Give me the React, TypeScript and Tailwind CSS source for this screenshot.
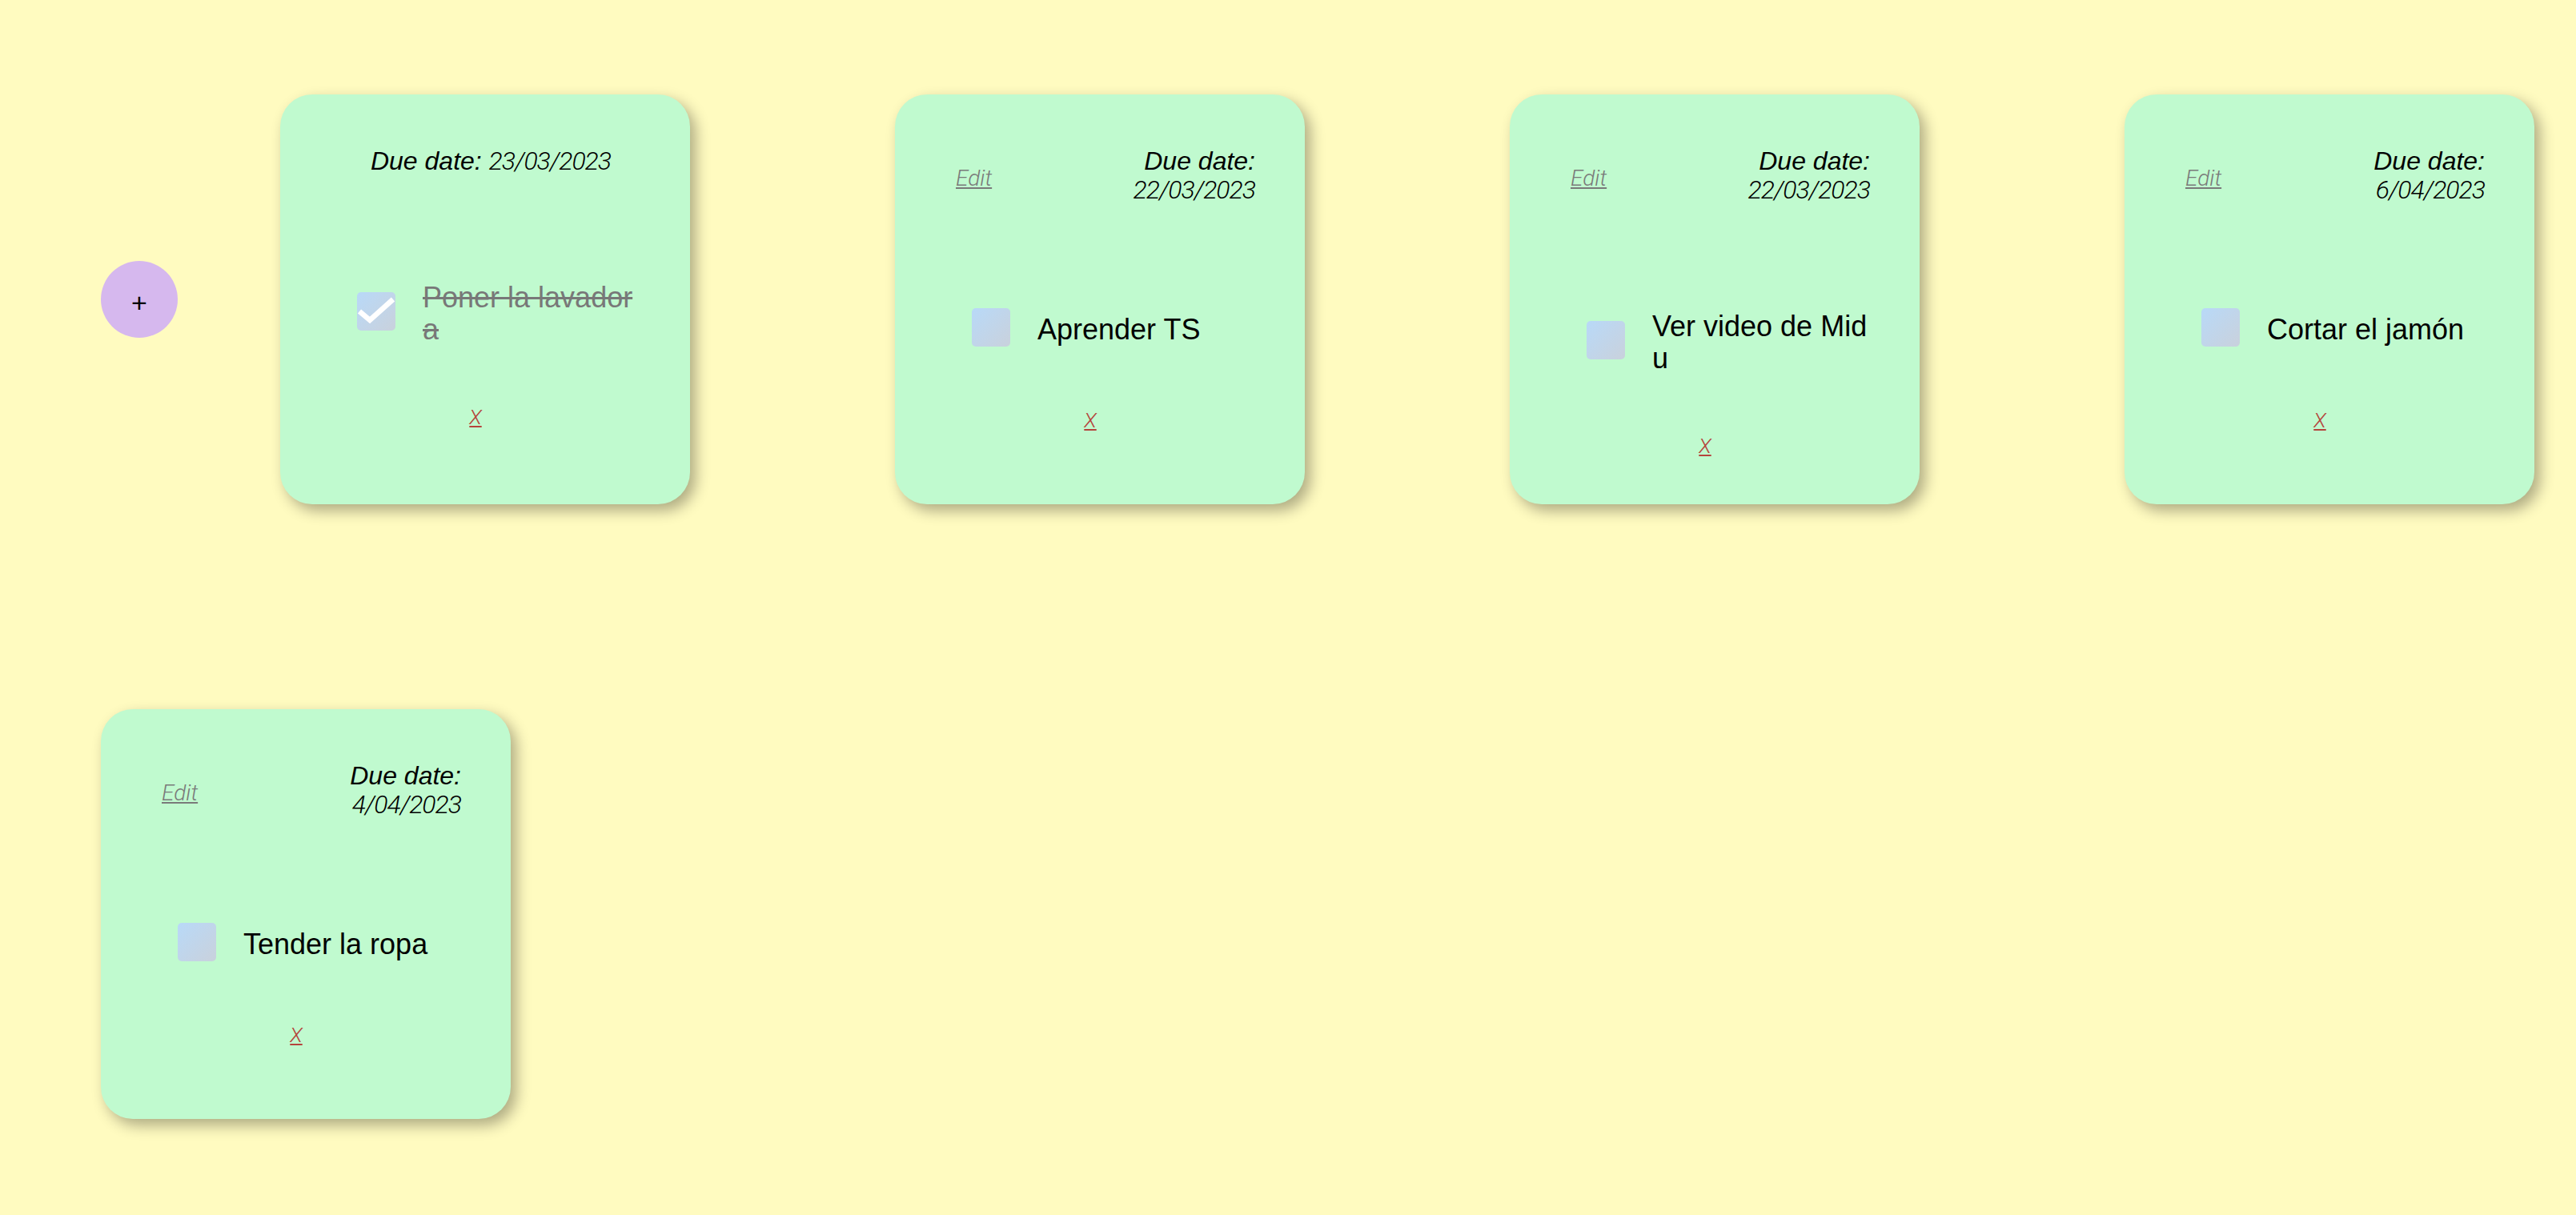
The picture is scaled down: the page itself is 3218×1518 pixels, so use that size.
import React from "react";

type Todo = { text: string; date: string; done: boolean; edit: boolean };

const todos: Todo[] = [
  { text: "Poner la lavadora", date: "23/03/2023", done: true, edit: false },
  { text: "Aprender TS", date: "22/03/2023", done: false, edit: true },
  { text: "Ver video de Midu", date: "22/03/2023", done: false, edit: true },
  { text: "Cortar el jamón", date: "6/04/2023", done: false, edit: true },
  { text: "Tender la ropa", date: "4/04/2023", done: false, edit: true },
];

function Check() {
  return (
    <svg viewBox="0 0 48 48" className="h-[48px] w-[48px]">
      <polyline
        points="3,24 16,35 45,9"
        fill="none"
        stroke="#ffffff"
        strokeWidth="6.5"
        strokeLinejoin="miter"
      />
    </svg>
  );
}

function Card({ t }: { t: Todo }) {
  return (
    <div className="flex h-[512px] w-[512px] shrink-0 flex-col rounded-[40px] bg-[#c0facf] pt-[65px] shadow-[7px_8px_18px_rgba(0,0,0,0.32)]">
      <div
        className={`flex items-center pl-[76px] pr-[62px] ${
          t.edit ? "justify-between gap-x-[60px]" : "justify-center"
        }`}
      >
        {t.edit && (
          <a className="shrink-0 cursor-pointer pt-[8px] font-['Roboto',sans-serif] text-[28px] font-light italic leading-[32px] text-[#7a7a7a] underline">
            Edit
          </a>
        )}
        <p
          className={`text-[32px] italic leading-[36px] text-black ${
            t.edit ? "text-right" : "text-center"
          }`}
        >
          <span>Due date:</span>{" "}
          <span className="font-['Roboto',sans-serif] font-light tracking-[-1px]">
            {t.date}
          </span>
        </p>
      </div>

      <div className="mt-[130px] flex items-center gap-[34px] pl-[96px] pr-[57px]">
        <div className="flex h-[48px] w-[48px] shrink-0 items-center justify-center rounded-[5px] bg-linear-to-br from-[#b8d9f8] to-[#c9d1dc]">
          {t.done && <Check />}
        </div>
        <p
          className={`min-w-0 flex-1 translate-y-[3px] break-all text-[36px] leading-[40px] ${
            t.done ? "text-[#787878] line-through" : "text-black"
          }`}
        >
          {t.text}
        </p>
      </div>

      <div className="mt-[77px] flex justify-center pr-[24px]">
        <a className="cursor-pointer font-['Roboto',sans-serif] text-[26px] font-light italic leading-[30px] text-[#b5443c] underline">
          X
        </a>
      </div>
    </div>
  );
}

export default function App() {
  return (
    <div className="flex min-h-screen flex-wrap content-start items-center gap-[256px] bg-[#fffbc0] pb-[120px] pl-[126px] pt-[118px] font-['Liberation_Sans',Arial,sans-serif]">
      <button className="mr-[-128px] flex h-[96px] w-[96px] shrink-0 items-center justify-center rounded-full bg-[#d6b8ee] pt-[8px] text-[34px] leading-[34px] text-black">
        +
      </button>
      {todos.map((t) => (
        <Card key={t.text} t={t} />
      ))}
    </div>
  );
}
